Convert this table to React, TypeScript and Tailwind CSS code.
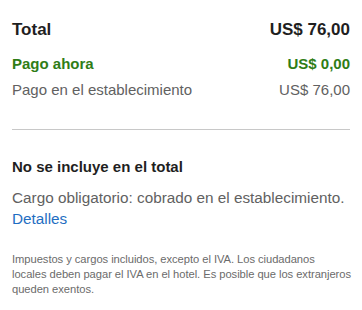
export default function App() {
  return (
    <div className="w-[362px] h-[310px] bg-white px-3 pt-[18px] font-['Liberation_Sans',Arial,sans-serif]">
      <div className="flex justify-between items-center h-6 text-[17px] font-bold text-[#1f1f1f]">
        <span>Total</span>
        <span>US$ 76,00</span>
      </div>
      <div className="flex justify-between items-center h-5 mt-[12px] text-[15px] font-bold text-[#2f7d16]">
        <span>Pago ahora</span>
        <span>US$ 0,00</span>
      </div>
      <div className="flex justify-between items-center h-5 mt-[6px] text-[15px] text-[#616161]">
        <span>Pago en el establecimiento</span>
        <span>US$ 76,00</span>
      </div>
      <hr className="mt-[29px] border-t border-[#c8c8c8]" />
      <div className="mt-[27px] text-[15px] font-bold text-[#1f1f1f] leading-5">No se incluye en el total</div>
      <p className="mt-[10px] text-[15.3px] leading-[21px] text-[#616161]">
        Cargo obligatorio: cobrado en el establecimiento.
        <br />
        <a href="#" className="text-[#1f6ec2]">Detalles</a>
      </p>
      <p className="mt-[23px] text-[11.2px] leading-[15px] text-[#6b6b6b] whitespace-nowrap tracking-[-0.05px]">
        Impuestos y cargos incluidos, excepto el IVA. Los ciudadanos
        <br />
        locales deben pagar el IVA en el hotel. Es posible que los extranjeros
        <br />
        queden exentos.
      </p>
    </div>
  );
}
